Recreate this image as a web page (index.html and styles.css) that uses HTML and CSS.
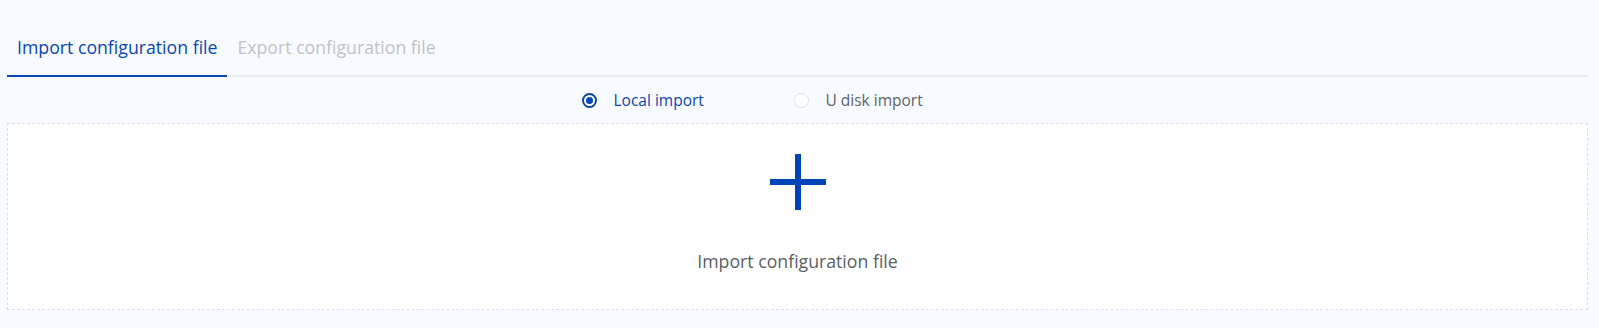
FILE: index.html
```html
<!DOCTYPE html>
<html lang="en">
<head>
    <meta charset="UTF-8">
    <title>Configuration file</title>
    <link rel="stylesheet" href="styles.css">
</head>
<body>
    <div class="page">
        <div class="tabs">
            <div class="tab active">Import configuration file</div>
            <div class="tab">Export configuration file</div>
        </div>

        <div class="radios">
            <label class="radio checked">
                <span class="radio-dot"></span>
                <span class="radio-text">Local import</span>
            </label>
            <label class="radio">
                <span class="radio-dot"></span>
                <span class="radio-text">U disk import</span>
            </label>
        </div>

        <div class="upload">
            <svg class="plus" width="56" height="56" viewBox="0 0 56 56">
                <rect x="25" y="0" width="6" height="56" fill="#0045b7"/>
                <rect x="0" y="25" width="56" height="6" fill="#0045b7"/>
            </svg>
            <div class="upload-text">Import configuration file</div>
        </div>
    </div>
</body>
</html>
```
FILE: styles.css
```css
* {
    margin: 0;
    padding: 0;
    box-sizing: border-box;
}

body {
    background: #f7fbff;
    font-family: "Open Sans", Lato, sans-serif;
}

.page {
    padding: 27px 11px 0 7px;
}

.tabs {
    display: flex;
    border-bottom: 2px solid #e9edf2;
}

.tab {
    padding: 0 10px 8px 10px;
    line-height: 40px;
    font-size: 17.7px;
    color: #bfc2c7;
    margin-bottom: -2px;
    border-bottom: 2px solid transparent;
}

.tab.active {
    color: #0a45b5;
    border-bottom-color: #0a45b5;
}

.radios {
    height: 46px;
    display: flex;
    justify-content: center;
    align-items: center;
    padding-right: 8px;
}

.radio {
    width: 212px;
    display: flex;
    align-items: center;
    font-size: 15.5px;
    color: #606266;
}

.radio-dot {
    width: 15px;
    height: 15px;
    border: 1px solid #dcdfe6;
    border-radius: 50%;
    background: #fff;
    margin-right: 17px;
    display: flex;
    align-items: center;
    justify-content: center;
}

.radio.checked .radio-dot {
    border: 2px solid #0a45b5;
}

.radio.checked .radio-dot::after {
    content: "";
    width: 7px;
    height: 7px;
    border-radius: 50%;
    background: #0a45b5;
}

.radio.checked .radio-text {
    color: #0a45b5;
}

.upload {
    height: 187px;
    border: 1px dashed #dcdfe6;
    background: #fff;
    display: flex;
    flex-direction: column;
    align-items: center;
    padding-top: 30px;
}

.upload-text {
    margin-top: 39px;
    line-height: 24px;
    font-size: 17.7px;
    color: #5a5e66;
}
```
